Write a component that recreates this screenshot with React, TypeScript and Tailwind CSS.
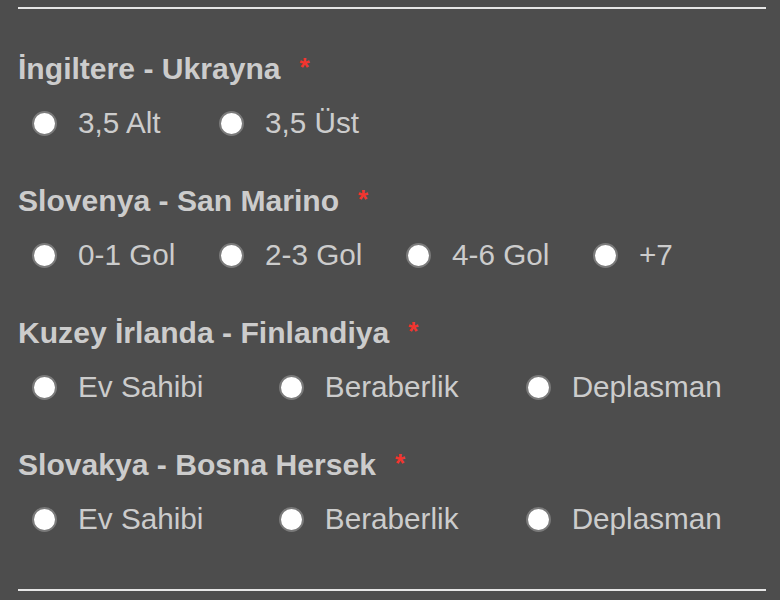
import React from "react";

type Q = { title: string; options: string[]; cols: 3 | 4 };

const questions: Q[] = [
  { title: "İngiltere - Ukrayna", options: ["3,5 Alt", "3,5 Üst"], cols: 4 },
  { title: "Slovenya - San Marino", options: ["0-1 Gol", "2-3 Gol", "4-6 Gol", "+7"], cols: 4 },
  { title: "Kuzey İrlanda - Finlandiya", options: ["Ev Sahibi", "Beraberlik", "Deplasman"], cols: 3 },
  { title: "Slovakya - Bosna Hersek", options: ["Ev Sahibi", "Beraberlik", "Deplasman"], cols: 3 },
];

export default function App() {
  return (
    <div
      className="w-[780px] h-[600px] bg-[#4d4d4d] overflow-hidden pl-[18px] pr-[14px]"
      style={{ fontFamily: '"Liberation Sans", Arial, Helvetica, sans-serif' }}
    >
      <div className="mt-[7px] h-[2px] bg-[#e6e6e6]" />
      <div className="pt-[42px] flex flex-col gap-[42px]">
        {questions.map((q) => (
          <div key={q.title} className="flex flex-col">
            <div className="h-[36px] leading-[36px] text-[30.1px] font-bold text-[#cccccc] whitespace-nowrap">
              {q.title}
              <span className="relative -top-[3px] ml-[19px] text-[26px] font-bold text-[#f2352f]">*</span>
            </div>
            <div className="mt-[18px] h-[36px] flex">
              {q.options.map((o) => (
                <label
                  key={o}
                  className={
                    (q.cols === 4 ? "w-[25%]" : "w-[33%]") +
                    " flex items-center pl-[14px] gap-[21px]"
                  }
                >
                  <span className="w-[25px] h-[25px] shrink-0 rounded-full bg-white border-2 border-[#7a7a7a]" />
                  <span className="text-[29.7px] leading-[36px] text-[#cccccc] whitespace-nowrap">{o}</span>
                </label>
              ))}
            </div>
          </div>
        ))}
      </div>
      <div className="mt-[52px] h-[2px] bg-[#e6e6e6]" />
    </div>
  );
}
